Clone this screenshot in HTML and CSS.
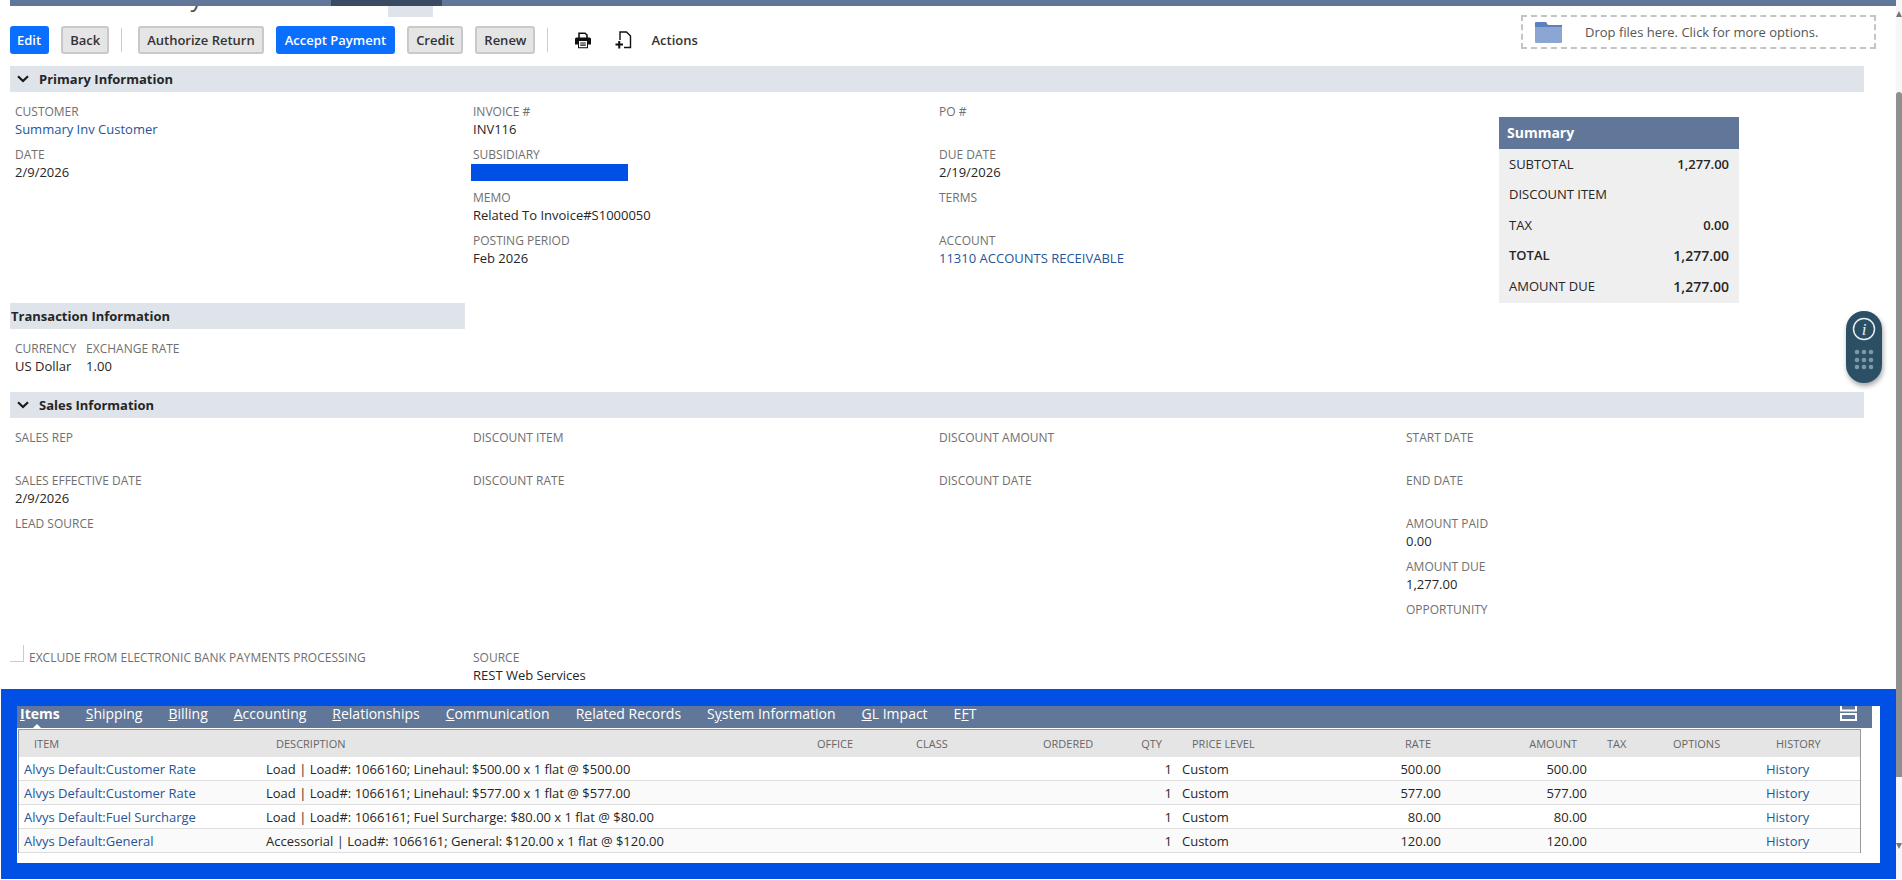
FILE: index.html
```html
<!DOCTYPE html>
<html>
<head>
    <meta charset="utf-8">
    <title>Invoice Summary</title>
    <link rel="stylesheet" href="styles.css">
</head>
<body>
<div class="page">
    <div class="main">
        <div class="nav-bar"><span class="nav-active"></span></div>
        <div class="head">
            <div class="head-left">
                <div class="title-strip">
                    <span class="page-title">Invoice Summary</span>
                    <span class="title-tab"></span>
                </div>
                <div class="toolbar">
                    <span class="btn btn-primary btn-edit">Edit</span>
                    <span class="btn">Back</span>
                    <span class="toolbar-sep"></span>
                    <span class="btn">Authorize Return</span>
                    <span class="btn btn-primary">Accept Payment</span>
                    <span class="btn">Credit</span>
                    <span class="btn">Renew</span>
                    <span class="toolbar-sep"></span>
                    <svg class="icon-print" width="16" height="17" viewBox="0 0 16 17">
                        <path d="M4 6V1.2h6L12 3v3" fill="none" stroke="#111" stroke-width="1.6"/>
                        <path d="M1.5 5.5h13a1.5 1.5 0 0 1 1.500 1.500v5.500h-3V16.200H3V12.500H0V7a1.500 1.500 0 0 1 1.500-1.500z" fill="#111"/>
                        <rect x="4" y="9" width="8" height="6.200" fill="#fff"/>
                        <path d="M5.200 11h5.600M5.200 13.200h5.600" stroke="#111" stroke-width="1.200"/>
                    </svg>
                    <svg class="icon-add" width="17" height="18" viewBox="0 0 17 18">
                        <path d="M5 9V1h6.500L15.500 5v11.500H9" fill="none" stroke="#111" stroke-width="1.400"/>
                        <path d="M0.500 13.500h7.500M4.250 10v7.500" stroke="#111" stroke-width="2"/>
                    </svg>
                    <span class="actions">Actions</span>
                </div>
            </div>
            <div class="dropzone">
                <svg class="icon-folder" width="27" height="21" viewBox="0 0 27 21">
                    <path d="M0 1a1 1 0 0 1 1-1h10l2 3h14v6H0z" fill="#5b80bf"/>
                    <path d="M0 5h27v15a1 1 0 0 1-1 1H1a1 1 0 0 1-1-1z" fill="#8ca6d4"/>
                </svg>
                <span>Drop files here. Click for more options.</span>
            </div>
        </div>

        <div class="section-bar"><svg class="chevron" width="12" height="8" viewBox="0 0 12 8"><path d="M1 1.200l5 4.800 5-4.800" fill="none" stroke="#1a1a1a" stroke-width="2.200"/></svg>Primary Information</div>
        <div class="fields primary">
            <div class="col">
                <div class="field"><div class="label">Customer</div><a class="value link">Summary Inv Customer</a></div>
                <div class="field"><div class="label">Date</div><div class="value">2/9/2026</div></div>
            </div>
            <div class="col">
                <div class="field"><div class="label">Invoice #</div><div class="value">INV116</div></div>
                <div class="field"><div class="label">Subsidiary</div><div class="value"><span class="redacted"></span></div></div>
                <div class="field"><div class="label">Memo</div><div class="value">Related To Invoice#S1000050</div></div>
                <div class="field"><div class="label">Posting Period</div><div class="value">Feb 2026</div></div>
            </div>
            <div class="col">
                <div class="field"><div class="label">PO #</div><div class="value"></div></div>
                <div class="field"><div class="label">Due Date</div><div class="value">2/19/2026</div></div>
                <div class="field"><div class="label">Terms</div><div class="value"></div></div>
                <div class="field"><div class="label">Account</div><a class="value link">11310 ACCOUNTS RECEIVABLE</a></div>
            </div>
            <div class="summary">
                <div class="summary-head">Summary</div>
                <div class="summary-row"><span>SUBTOTAL</span><b>1,277.00</b></div>
                <div class="summary-row"><span>DISCOUNT ITEM</span></div>
                <div class="summary-row"><span>TAX</span><b>0.00</b></div>
                <div class="summary-row"><b>TOTAL</b><b class="big">1,277.00</b></div>
                <div class="summary-row"><span>AMOUNT DUE</span><b class="big">1,277.00</b></div>
            </div>
        </div>

        <div class="section-bar short">Transaction Information</div>
        <div class="fields transaction">
            <div class="field"><div class="label">Currency</div><div class="value">US Dollar</div></div>
            <div class="field"><div class="label">Exchange Rate</div><div class="value">1.00</div></div>
        </div>

        <div class="section-bar"><svg class="chevron" width="12" height="8" viewBox="0 0 12 8"><path d="M1 1.200l5 4.800 5-4.800" fill="none" stroke="#1a1a1a" stroke-width="2.200"/></svg>Sales Information</div>
        <div class="fields sales">
            <div class="col">
                <div class="field"><div class="label">Sales Rep</div><div class="value"></div></div>
                <div class="field"><div class="label">Sales Effective Date</div><div class="value">2/9/2026</div></div>
                <div class="field"><div class="label">Lead Source</div><div class="value"></div></div>
            </div>
            <div class="col">
                <div class="field"><div class="label">Discount Item</div><div class="value"></div></div>
                <div class="field"><div class="label">Discount Rate</div><div class="value"></div></div>
            </div>
            <div class="col">
                <div class="field"><div class="label">Discount Amount</div><div class="value"></div></div>
                <div class="field"><div class="label">Discount Date</div><div class="value"></div></div>
            </div>
            <div class="col">
                <div class="field"><div class="label">Start Date</div><div class="value"></div></div>
                <div class="field"><div class="label">End Date</div><div class="value"></div></div>
                <div class="field"><div class="label">Amount Paid</div><div class="value">0.00</div></div>
                <div class="field"><div class="label">Amount Due</div><div class="value">1,277.00</div></div>
                <div class="field"><div class="label">Opportunity</div><div class="value"></div></div>
            </div>
        </div>
        <div class="fields source-row">
            <div class="exclude"><span class="checkbox"></span><span class="label">Exclude From Electronic Bank Payments Processing</span></div>
            <div class="field"><div class="label">Source</div><div class="value">REST Web Services</div></div>
        </div>

        <div class="tabs-frame">
            <div class="tabs-panel">
                <div class="tabs">
                    <span class="tab tab-active"><u>I</u>tems</span>
                    <span class="tab"><u>S</u>hipping</span>
                    <span class="tab"><u>B</u>illing</span>
                    <span class="tab"><u>A</u>ccounting</span>
                    <span class="tab"><u>R</u>elationships</span>
                    <span class="tab"><u>C</u>ommunication</span>
                    <span class="tab">R<u>e</u>lated Records</span>
                    <span class="tab">S<u>y</u>stem Information</span>
                    <span class="tab"><u>G</u>L Impact</span>
                    <span class="tab">E<u>F</u>T</span>
                    <svg class="icon-split" width="17" height="15" viewBox="0 0 17 15">
                        <path d="M1 0v4.500h15V0M1 8h15v6H1z" fill="none" stroke="#fff" stroke-width="2"/>
                    </svg>
                </div>
                <div class="items-box">
                    <table class="items">
                        <colgroup>
                            <col class="c-item"><col class="c-desc"><col class="c-office"><col class="c-class"><col class="c-ordered"><col class="c-qty"><col class="c-price"><col class="c-rate"><col class="c-amount"><col class="c-tax"><col class="c-options"><col class="c-history">
                        </colgroup>
                        <thead>
                            <tr>
                                <th>Item</th><th>Description</th><th>Office</th><th>Class</th><th>Ordered</th><th class="num">Qty</th><th>Price Level</th><th class="num">Rate</th><th class="num">Amount</th><th>Tax</th><th>Options</th><th>History</th>
                            </tr>
                        </thead>
                        <tbody>
                            <tr>
                                <td><a class="link">Alvys Default:Customer Rate</a></td>
                                <td>Load | Load#: 1066160; Linehaul: $500.00 x 1 flat @ $500.00</td>
                                <td></td><td></td><td></td><td class="num">1</td><td>Custom</td><td class="num">500.00</td><td class="num">500.00</td><td></td><td></td>
                                <td><a class="link">History</a></td>
                            </tr>
                            <tr>
                                <td><a class="link">Alvys Default:Customer Rate</a></td>
                                <td>Load | Load#: 1066161; Linehaul: $577.00 x 1 flat @ $577.00</td>
                                <td></td><td></td><td></td><td class="num">1</td><td>Custom</td><td class="num">577.00</td><td class="num">577.00</td><td></td><td></td>
                                <td><a class="link">History</a></td>
                            </tr>
                            <tr>
                                <td><a class="link">Alvys Default:Fuel Surcharge</a></td>
                                <td>Load | Load#: 1066161; Fuel Surcharge: $80.00 x 1 flat @ $80.00</td>
                                <td></td><td></td><td></td><td class="num">1</td><td>Custom</td><td class="num">80.00</td><td class="num">80.00</td><td></td><td></td>
                                <td><a class="link">History</a></td>
                            </tr>
                            <tr>
                                <td><a class="link">Alvys Default:General</a></td>
                                <td>Accessorial | Load#: 1066161; General: $120.00 x 1 flat @ $120.00</td>
                                <td></td><td></td><td></td><td class="num">1</td><td>Custom</td><td class="num">120.00</td><td class="num">120.00</td><td></td><td></td>
                                <td><a class="link">History</a></td>
                            </tr>
                        </tbody>
                    </table>
                </div>
            </div>
        </div>
    </div>

    <div class="scrollbar">
        <span class="scroll-arrow"></span>
        <span class="scroll-thumb"></span>
        <span class="scroll-arrow down"></span>
    </div>

    <div class="help-widget">
        <svg width="36" height="72" viewBox="0 0 36 72">
            <circle cx="18" cy="18" r="10.500" fill="none" stroke="#e8eef1" stroke-width="1.500"/>
            <text x="18" y="23.500" class="help-i">i</text>
            <g fill="#7e98a6">
                <circle cx="11" cy="41" r="2.300"/><circle cx="18" cy="41" r="2.300"/><circle cx="25" cy="41" r="2.300"/>
                <circle cx="11" cy="49" r="2.300"/><circle cx="18" cy="49" r="2.300"/><circle cx="25" cy="49" r="2.300"/>
                <circle cx="11" cy="56" r="2.300"/><circle cx="18" cy="56" r="2.300"/><circle cx="25" cy="56" r="2.300"/>
            </g>
        </svg>
    </div>
</div>
</body>
</html>
```

FILE: styles.css
```css
html, body {
    margin: 0;
    padding: 0;
    height: 100%;
    overflow: hidden;
    background: #fff;
}

body {
    color: #262626;
    font: 13px/17px "Open Sans", "Liberation Sans", sans-serif;
}

a.link, .link {
    color: #255599;
    text-decoration: none;
}

.page {
    position: relative;
    display: flex;
    width: 1902px;
    height: 880px;
    overflow: hidden;
}

.main {
    width: 1896px;
    flex: none;
}

/* top */
.nav-bar {
    position: relative;
    z-index: 1;
    display: flex;
    height: 6px;
    margin-left: 10px;
    background: #607799;
}

.nav-active {
    width: 111px;
    margin-left: 321px;
    background: #3b4a63;
}

.head {
    display: flex;
    justify-content: space-between;
    height: 60px;
}

.title-strip {
    display: flex;
    height: 11px;
    margin-left: 10px;
}

.page-title {
    width: 378px;
    height: 28px;
    margin-top: -23px;
    font-size: 24px;
    line-height: 28px;
    color: #4d4d4d;
    white-space: nowrap;
}

.title-tab {
    width: 45px;
    background: #dfe4eb;
}

.toolbar {
    display: flex;
    align-items: center;
    margin: 9px 0 0 10px;
    height: 28px;
}

.btn {
    box-sizing: border-box;
    height: 28px;
    margin-right: 12px;
    padding: 0 7px;
    border: 2px solid #c9c9c9;
    border-radius: 3px;
    background: #e5e5e5;
    color: #333;
    font-weight: 600;
    line-height: 24px;
    white-space: nowrap;
}

.btn-primary {
    border-color: #0a6eff;
    background: #0a6eff;
    color: #fff;
}

.btn-edit {
    padding: 0 6px 0 5px;
}

.toolbar-sep {
    width: 1px;
    height: 24px;
    margin: 0 16px 0 0;
    background: #ccc;
}

.icon-print {
    margin-left: 11px;
}

.icon-add {
    margin-left: 24px;
}

.actions {
    margin-left: 19px;
    font-weight: 600;
    color: #333;
}

.dropzone {
    box-sizing: border-box;
    display: flex;
    align-items: center;
    width: 355px;
    height: 34px;
    margin: 9px 20px 0 0;
    padding-left: 12px;
    border: 2px dashed #c4c4c4;
    color: #555;
}

.icon-folder {
    margin-right: 23px;
}

/* sections */
.section-bar {
    box-sizing: border-box;
    display: flex;
    align-items: center;
    width: 1854px;
    height: 26px;
    margin-left: 10px;
    padding-left: 7px;
    background: #dfe4eb;
    color: #262626;
    font-weight: 700;
}

.section-bar.short {
    width: 455px;
    padding-left: 1px;
}

.chevron {
    margin-right: 10px;
}

.fields {
    margin-left: 15px;
}

.primary, .sales {
    display: grid;
    grid-template-columns: 458px 466px 467px 1fr;
    padding-top: 11px;
}

.primary {
    height: 200px;
}

.field {
    height: 43px;
}

.label {
    font-size: 12px;
    line-height: 18px;
    color: #6f6f6f;
    text-transform: uppercase;
}

.value {
    display: block;
    min-height: 17px;
}

.redacted {
    display: block;
    width: 157px;
    height: 17px;
    margin-left: -2px;
    background: #0050e6;
}

.summary {
    width: 240px;
    height: 186px;
    margin: 14px 0 0 93px;
    background: #efefef;
}

.summary-head {
    height: 32px;
    padding-left: 8px;
    background: #607799;
    color: #fff;
    font-size: 14px;
    font-weight: 700;
    line-height: 32px;
}

.summary-row {
    display: flex;
    justify-content: space-between;
    height: 30.400px;
    padding: 0 10px;
    line-height: 31px;
}

.summary-row b {
    font-weight: 600;
}

.summary-row b.big {
    font-size: 14px;
}

.transaction {
    display: flex;
    gap: 10px;
    height: 52px;
    padding-top: 11px;
}

.source-row {
    display: flex;
    height: 40px;
    margin: 5px 0 0 10px;
}

.exclude {
    display: flex;
    flex: none;
    align-items: flex-start;
    width: 463px;
}

.checkbox {
    box-sizing: border-box;
    flex: none;
    width: 14px;
    height: 17px;
    margin: -4px 5px 0 0;
    border-right: 1px solid #ccc;
    border-bottom: 1px solid #ccc;
}

.sales {
    height: 215px;
}

/* blue frame round the tabs */
.tabs-frame {
    box-sizing: border-box;
    width: 1895px;
    height: 190px;
    margin-left: 1px;
    padding: 17px 16px 16px;
    background: #0050e6;
}

.tabs-panel {
    height: 157px;
    background: #fff;
}

.tabs {
    position: relative;
    display: flex;
    gap: 26px;
    height: 22px;
    margin-right: 8px;
    padding-left: 3px;
    background: #607799;
    color: #fff;
    font-size: 14px;
    line-height: 14px;
}

.tab {
    padding-top: 1px;
    white-space: nowrap;
}

.tab-active {
    font-weight: 700;
}

.tab-active:after {
    content: "";
    position: absolute;
    left: 16px;
    bottom: 0;
    border: 4px solid transparent;
    border-top: 0;
    border-bottom-color: #fff;
}

.icon-split {
    margin-left: auto;
    margin-right: 15px;
}

.items-box {
    box-sizing: border-box;
    height: 124px;
    margin: 1px 19px 0 1px;
    border: 1px solid #999;
}

.items {
    width: 100%;
    table-layout: fixed;
    border-collapse: collapse;
}

.c-item { width: 242px; }
.c-desc { width: 541px; }
.c-office { width: 99px; }
.c-class { width: 127px; }
.c-ordered { width: 97px; }
.c-qty { width: 52px; }
.c-price { width: 143px; }
.c-rate { width: 126px; }
.c-amount { width: 146px; }
.c-tax { width: 66px; }
.c-options { width: 103px; }

.items th {
    height: 27px;
    padding: 0 0 0 15px;
    background: #e5e5e5;
    color: #666;
    font-size: 11px;
    font-weight: 400;
    text-align: left;
    text-transform: uppercase;
}

.items th.num {
    padding: 0 15px 0 0;
    text-align: right;
}

.items td {
    height: 22px;
    padding: 1px 5px 0;
    border-bottom: 1px solid #ddd;
    white-space: nowrap;
}

.items td.num {
    text-align: right;
}

.items tbody tr:nth-child(even) td {
    background: #fafafa;
}

/* scrollbar on the right */
.scrollbar {
    display: flex;
    flex-direction: column;
    width: 6px;
    height: 880px;
    background: #f7f7f7;
}

.scroll-arrow {
    height: 0;
    margin-top: 11px;
    border: 3px solid transparent;
    border-top: 0;
    border-bottom: 6px solid #777;
}

.scroll-thumb {
    height: 685px;
    margin-top: 75px;
    border-radius: 3px 3px 0 0;
    background: #8f8f8f;
}

.scroll-arrow.down {
    margin-top: 66px;
    border: 3px solid transparent;
    border-bottom: 0;
    border-top: 6px solid #777;
}

/* floating help widget */
.help-widget {
    position: absolute;
    top: 311px;
    left: 1846px;
    width: 36px;
    height: 72px;
    border-radius: 18px;
    background: #2b5066;
    box-shadow: 1px 3px 5px rgba(0, 0, 0, .35);
}

.help-widget svg {
    display: block;
}

.help-i {
    fill: #e8eef1;
    font: italic 400 17px "Liberation Serif", serif;
    text-anchor: middle;
}
```
